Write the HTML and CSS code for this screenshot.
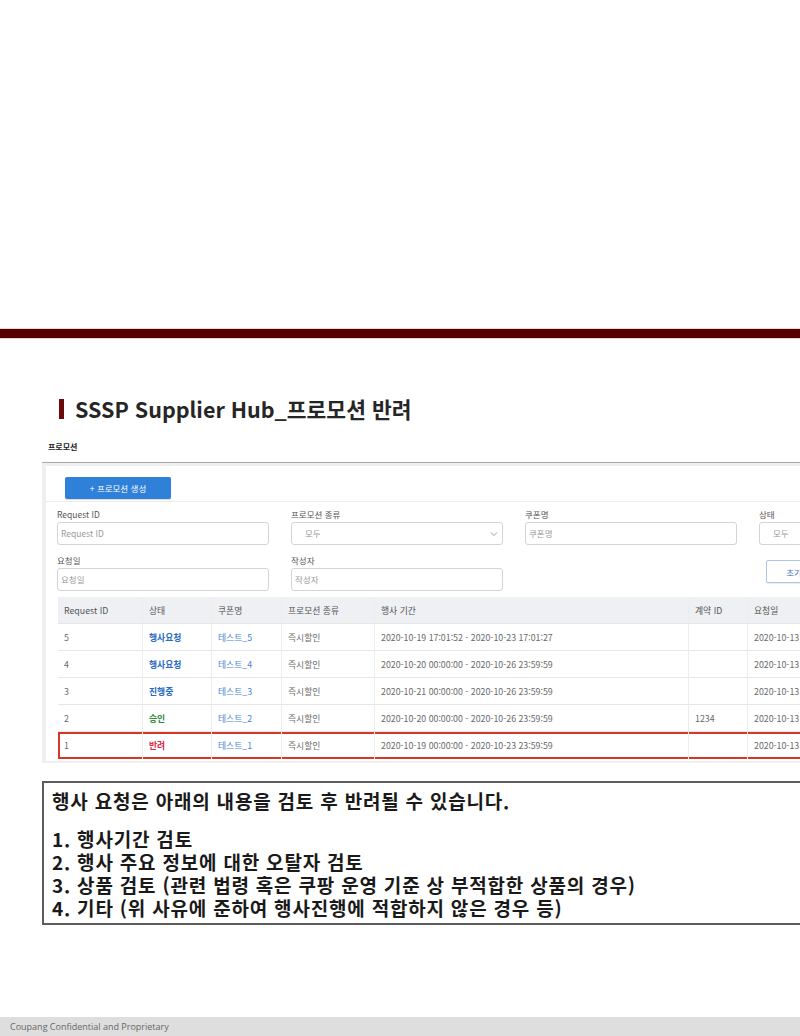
FILE: index.html
```html
<!DOCTYPE html>
<html lang="ko">

<head>
    <meta charset="UTF-8">
    <meta name="viewport" content="width=device-width, initial-scale=1.0">
    <title>SSSP Supplier Hub_프로모션 반려</title>
    <link rel="stylesheet" href="styles.css">
</head>

<body>

    <div class="slide">
        <div class="top-space"></div>
        <div class="rule"></div>

        <h1 class="slide-title"><span class="title-bar"></span>SSSP Supplier Hub_프로모션 반려</h1>

        <div class="page-label">프로모션</div>

        <div class="panel">
            <div class="card">
                <div class="button-row">
                    <button class="btn-primary">+ 프로모션 생성</button>
                </div>

                <div class="filters">
                    <div class="field">
                        <label>Request ID</label>
                        <div class="input">Request ID</div>
                    </div>
                    <div class="field">
                        <label>프로모션 종류</label>
                        <div class="input select">모두
                            <svg class="chevron" width="8" height="6" viewBox="0 0 8 6"><path d="M1 1.5 L4 4.5 L7 1.5" fill="none" stroke="#999" stroke-width="1"/></svg>
                        </div>
                    </div>
                    <div class="field">
                        <label>쿠폰명</label>
                        <div class="input">쿠폰명</div>
                    </div>
                    <div class="field">
                        <label>상태</label>
                        <div class="input select">모두</div>
                    </div>
                    <div class="field">
                        <label>요청일</label>
                        <div class="input">요청일</div>
                    </div>
                    <div class="field">
                        <label>작성자</label>
                        <div class="input">작성자</div>
                    </div>
                    <div class="field"></div>
                    <div class="field">
                        <button class="btn-reset">초기화</button>
                    </div>
                </div>

                <table class="promo-table">
                    <colgroup>
                        <col style="width: 85px">
                        <col style="width: 69px">
                        <col style="width: 70px">
                        <col style="width: 93px">
                        <col style="width: 314px">
                        <col style="width: 59px">
                        <col style="width: 100px">
                    </colgroup>
                    <thead>
                        <tr>
                            <th>Request ID</th>
                            <th>상태</th>
                            <th>쿠폰명</th>
                            <th>프로모션 종류</th>
                            <th>행사 기간</th>
                            <th>계약 ID</th>
                            <th>요청일</th>
                        </tr>
                    </thead>
                    <tbody>
                        <tr>
                            <td>5</td>
                            <td class="status requested">행사요청</td>
                            <td class="link">테스트_5</td>
                            <td>즉시할인</td>
                            <td>2020-10-19 17:01:52 - 2020-10-23 17:01:27</td>
                            <td></td>
                            <td>2020-10-13</td>
                        </tr>
                        <tr>
                            <td>4</td>
                            <td class="status requested">행사요청</td>
                            <td class="link">테스트_4</td>
                            <td>즉시할인</td>
                            <td>2020-10-20 00:00:00 - 2020-10-26 23:59:59</td>
                            <td></td>
                            <td>2020-10-13</td>
                        </tr>
                        <tr>
                            <td>3</td>
                            <td class="status progress">진행중</td>
                            <td class="link">테스트_3</td>
                            <td>즉시할인</td>
                            <td>2020-10-21 00:00:00 - 2020-10-26 23:59:59</td>
                            <td></td>
                            <td>2020-10-13</td>
                        </tr>
                        <tr>
                            <td>2</td>
                            <td class="status approved">승인</td>
                            <td class="link">테스트_2</td>
                            <td>즉시할인</td>
                            <td>2020-10-20 00:00:00 - 2020-10-26 23:59:59</td>
                            <td>1234</td>
                            <td>2020-10-13</td>
                        </tr>
                        <tr class="highlight">
                            <td>1</td>
                            <td class="status rejected">반려</td>
                            <td class="link">테스트_1</td>
                            <td>즉시할인</td>
                            <td>2020-10-19 00:00:00 - 2020-10-23 23:59:59</td>
                            <td></td>
                            <td>2020-10-13</td>
                        </tr>
                    </tbody>
                </table>
            </div>
        </div>

        <div class="notice">
            <p class="notice-head">행사 요청은 아래의 내용을 검토 후 반려될 수 있습니다.</p>
            <p>1. 행사기간 검토</p>
            <p>2. 행사 주요 정보에 대한 오탈자 검토</p>
            <p>3. 상품 검토 (관련 법령 혹은 쿠팡 운영 기준 상 부적합한 상품의 경우)</p>
            <p>4. 기타 (위 사유에 준하여 행사진행에 적합하지 않은 경우 등)</p>
        </div>

        <div class="footer">Coupang Confidential and Proprietary</div>
    </div>

</body>

</html>
```

FILE: styles.css
```css
* {
    margin: 0;
    padding: 0;
    box-sizing: border-box;
}

body {
    background: #fff;
    font-family: "Noto Sans CJK KR", "Noto Sans", sans-serif;
    color: #333;
}

.slide {
    width: 800px;
    height: 1036px;
    overflow: hidden;
    display: flex;
    flex-direction: column;
}

.top-space {
    height: 329px;
    flex-shrink: 0;
}

.rule {
    height: 9px;
    flex-shrink: 0;
    background: #560000;
    box-shadow: 0 -1px 0 #ecd2d2, 0 1px 0 #ecd2d2;
}

/* Title */
.slide-title {
    display: flex;
    align-items: center;
    gap: 11px;
    margin-top: 56px;
    padding-left: 59px;
    font-size: 21.5px;
    line-height: 30px;
    font-weight: 700;
    color: #262626;
    white-space: nowrap;
}

.title-bar {
    display: block;
    width: 5px;
    height: 20px;
    background: #6b0a0a;
}

.page-label {
    margin-top: 17px;
    padding-left: 48px;
    font-size: 8px;
    line-height: 12px;
    font-weight: 700;
    color: #222;
}

/* Panel */
.panel {
    width: 900px;
    flex-shrink: 0;
    margin-top: 9px;
    margin-left: 42px;
    border-top: 1px solid #a9a9a9;
    background: #efefef;
    padding: 3px 0 2px 4px;
}

.card {
    background: #fff;
    padding-bottom: 2px;
}

.button-row {
    padding: 11px 0 2px 19px;
    border-bottom: 1px solid #ececec;
}

.btn-primary {
    display: block;
    width: 106px;
    height: 22px;
    border: none;
    border-radius: 2px;
    background: #2f80d9;
    color: #fff;
    font-family: inherit;
    font-size: 8.5px;
    box-shadow: 0 1px 1px rgba(0, 0, 0, 0.15);
}

.filters {
    display: grid;
    grid-template-columns: repeat(4, 212px);
    column-gap: 22px;
    row-gap: 9px;
    padding: 6px 0 0 11px;
}

.field label {
    display: block;
    font-size: 8.5px;
    line-height: 12px;
    color: #555;
}

.input {
    position: relative;
    height: 23px;
    margin-top: 2px;
    border: 1px solid #d4d4d4;
    border-radius: 3px;
    padding-left: 3px;
    font-size: 8.5px;
    line-height: 21px;
    color: #9a9a9a;
}

.select {
    padding-left: 13px;
}

.chevron {
    position: absolute;
    right: 4px;
    top: 8px;
}

.btn-reset {
    display: block;
    width: 64px;
    height: 23px;
    margin: 6px 0 0 7px;
    border: 1px solid #a9c6e6;
    border-radius: 2px;
    background: #fff;
    color: #3a72b8;
    font-family: inherit;
    font-size: 8.5px;
    box-shadow: 0 1px 1px rgba(0, 0, 0, 0.08);
}

/* Table */
.promo-table {
    width: 790px;
    margin: 6px 0 0 12px;
    border-collapse: separate;
    border-spacing: 0;
    table-layout: fixed;
    font-size: 8.8px;
}

.promo-table th,
.promo-table td {
    height: 27px;
    padding: 0 6px;
    text-align: left;
    white-space: nowrap;
    border-bottom: 1px solid #e6e6e6;
    border-right: 1px solid #ededed;
}

.promo-table th {
    background: #eef0f3;
    font-weight: 400;
    color: #555;
}

.promo-table td {
    color: #6a6a6a;
}

.promo-table td.link {
    color: #4b86cf;
}

.status {
    font-weight: 700;
}

.promo-table td.requested,
.promo-table td.progress {
    color: #2a6cc4;
}

.promo-table td.approved {
    color: #2f8a3a;
}

.promo-table td.rejected {
    color: #e0284a;
}

.promo-table tr.highlight td {
    border-bottom: none;
    box-shadow: inset 0 2px 0 #d9362b, inset 0 -2px 0 #d9362b;
}

.promo-table tr.highlight td:first-child {
    box-shadow: inset 2px 0 0 #d9362b, inset 0 2px 0 #d9362b, inset 0 -2px 0 #d9362b;
}

/* Notice box */
.notice {
    width: 800px;
    flex-shrink: 0;
    margin-top: 18px;
    margin-left: 42px;
    border: 2px solid #5c5c5c;
    padding: 6px 8px 4px;
    font-size: 19px;
    line-height: 23px;
    letter-spacing: 0.8px;
    font-weight: 700;
    color: #1a1a1a;
    white-space: nowrap;
}

.notice-head {
    margin-bottom: 15px;
}

/* Footer */
.footer {
    margin-top: auto;
    height: 19px;
    background: #dedede;
    padding-left: 10px;
    font-family: "Open Sans", "Noto Sans", sans-serif;
    font-size: 9px;
    line-height: 19px;
    color: #666;
}
```
